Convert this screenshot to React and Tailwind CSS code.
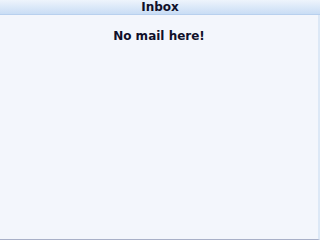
export default function App() {
  return (
    <div className="w-[320px] h-[240px] flex flex-col bg-[#f3f6fc] overflow-hidden" style={{ fontFamily: '"DejaVu Sans", sans-serif' }}>
      <div className="h-[15px] flex items-center justify-center bg-gradient-to-b from-[#eef4fc] to-[#c9ddf5] border-b border-[#b8d0ee]">
        <span className="text-[12px] font-bold text-[#10102a] leading-none">Inbox</span>
      </div>
      <div className="flex-1 flex flex-col items-center border-r-2 border-[#dce8f6] border-b border-b-[#a8b0c8]">
        <p className="mt-[15px] text-[12px] font-bold text-[#10102a] leading-none">No mail here!</p>
      </div>
    </div>
  );
}
